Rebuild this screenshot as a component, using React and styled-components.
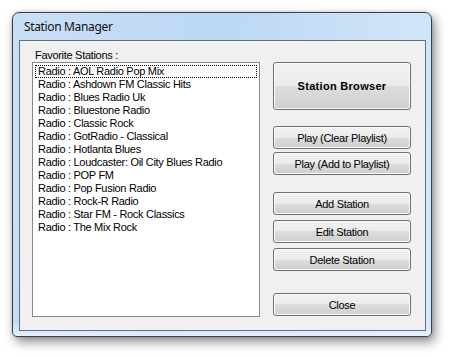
import React from "react";
import styled, { createGlobalStyle } from "styled-components";

const GlobalStyle = createGlobalStyle`
  html, body { margin: 0; padding: 0; background: #ffffff; }
  body { width: 452px; height: 357px; overflow: hidden; }
`;

const Page = styled.div`
  padding: 12px 0 0 12px;
  font-family: "Liberation Sans", Arial, sans-serif;
`;

const Window = styled.div`
  box-sizing: border-box;
  width: 420px;
  height: 325px;
  display: flex;
  flex-direction: column;
  border: 1px solid #3a414c;
  border-radius: 7px 7px 5px 5px;
  background:
    linear-gradient(180deg, rgba(255,255,255,0) 0%, rgba(255,255,255,0) 96%, rgba(230,242,255,0.9) 100%),
    linear-gradient(100deg, #c9dff5 0%, #bcd8f4 45%, #c6def6 65%, #d7e9fb 100%);
  box-shadow: 3px 5px 11px rgba(0, 0, 0, 0.45), 0 0 3px rgba(0,0,0,0.2);
`;

const TitleBar = styled.div`
  height: 27px;
  display: flex;
  align-items: center;
  padding-left: 11px;
  font-family: "Noto Sans", "Open Sans", sans-serif;
  font-size: 12px;
  letter-spacing: -0.35px;
  color: #101010;
`;

const ClientFrame = styled.div`
  flex: 1;
  margin: 0 5px 5px 6px;
  border: 1px solid #62717f;
  background: #f0f0f0;
  display: flex;
  padding: 8px 14px 12px 12px;
  font-size: 11px;
  letter-spacing: -0.3px;
  color: #000;
`;

const LeftColumn = styled.div`
  display: flex;
  flex-direction: column;
  width: 228px;
`;

const Label = styled.div`
  line-height: 13px;
  height: 13px;
  padding-left: 3px;
`;

const ListBox = styled.div`
  box-sizing: border-box;
  height: 255px;
  border: 1px solid #828790;
  background: #ffffff;
  padding: 2px;
`;

const Item = styled.div`
  height: 13px;
  line-height: 13px;
  padding-left: 3px;
  white-space: nowrap;
  outline: ${(p) => (p.$focused ? "1px dotted #000" : "none")};
  outline-offset: -1px;
`;

const RightColumn = styled.div`
  display: flex;
  flex-direction: column;
  width: 138px;
  margin-left: 13px;
  margin-top: 13px;
`;

const Button = styled.button`
  box-sizing: border-box;
  height: ${(p) => (p.$tall ? "48px" : "23px")};
  margin: ${(p) => p.$gap || 0}px 0 0 0;
  padding: 0;
  border: 1px solid #707070;
  border-radius: 3px;
  background: linear-gradient(180deg, #f2f2f2 0%, #ebebeb 50%, #dddddd 50%, #cfcfcf 100%);
  box-shadow: inset 0 0 0 1px #fbfbfb;
  font-family: "Liberation Sans", Arial, sans-serif;
  font-size: 11px;
  font-weight: ${(p) => (p.$bold ? 700 : 400)};
  letter-spacing: ${(p) => (p.$bold ? "0.3px" : "-0.3px")};
  color: #000;
  cursor: default;
`;

const stations = [
  "AOL Radio Pop Mix",
  "Ashdown FM Classic Hits",
  "Blues Radio Uk",
  "Bluestone Radio",
  "Classic Rock",
  "GotRadio - Classical",
  "Hotlanta Blues",
  "Loudcaster: Oil City Blues Radio",
  "POP FM",
  "Pop Fusion Radio",
  "Rock-R Radio",
  "Star FM - Rock Classics",
  "The Mix Rock",
];

export default function App() {
  return (
    <Page>
      <GlobalStyle />
      <Window>
        <TitleBar>Station Manager</TitleBar>
        <ClientFrame>
          <LeftColumn>
            <Label>Favorite Stations :</Label>
            <ListBox>
              {stations.map((s, i) => (
                <Item key={s} $focused={i === 0}>
                  Radio : {s}
                </Item>
              ))}
            </ListBox>
          </LeftColumn>
          <RightColumn>
            <Button $tall $bold>Station Browser</Button>
            <Button $gap={16}>Play (Clear Playlist)</Button>
            <Button $gap={3}>Play (Add to Playlist)</Button>
            <Button $gap={17}>Add Station</Button>
            <Button $gap={5}>Edit Station</Button>
            <Button $gap={5}>Delete Station</Button>
            <Button $gap={22}>Close</Button>
          </RightColumn>
        </ClientFrame>
      </Window>
    </Page>
  );
}
